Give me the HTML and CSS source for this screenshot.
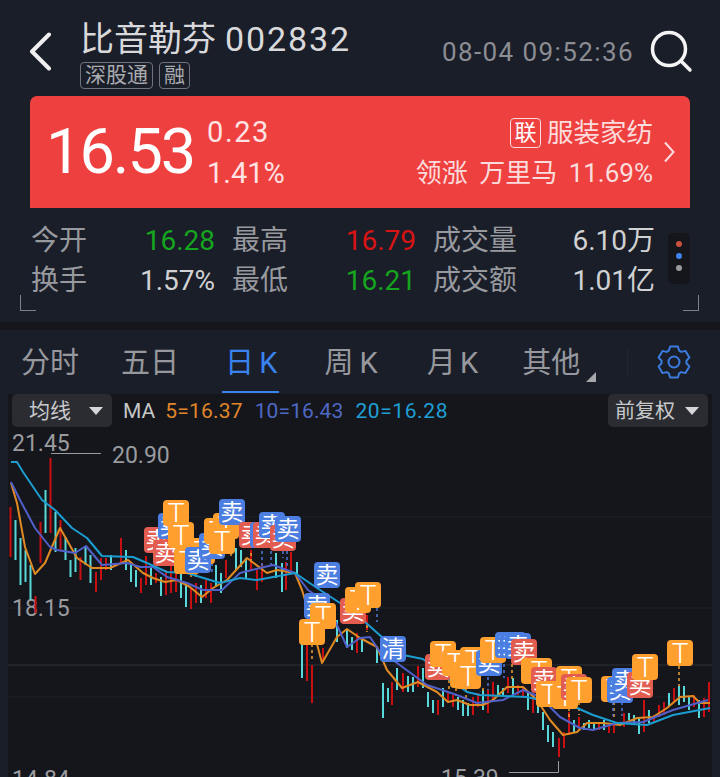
FILE: index.html
```html
<!DOCTYPE html>
<html lang="zh-CN">
<head>
    <meta charset="UTF-8">
    <meta name="viewport" content="width=device-width, initial-scale=1.0">
    <title>比音勒芬 002832</title>
    <link rel="stylesheet" href="styles.css">
</head>
<body>

    <!-- Header -->
    <header class="topbar">
        <svg class="back-icon" width="24" height="40" viewBox="0 0 24 40">
            <path d="M20 2.500 L3 19.500 L20 36.500" />
        </svg>
        <div class="stock-title">
            <div class="stock-name"><span>比音勒芬</span><span class="stock-code">002832</span></div>
            <div class="tags">
                <span class="tag">深股通</span>
                <span class="tag">融</span>
            </div>
        </div>
        <div class="quote-time">08-04 09:52:36</div>
        <svg class="search-icon" width="44" height="44" viewBox="0 0 44 44">
            <circle cx="20" cy="20" r="16.500" />
            <path d="M32 32 L41 41" />
        </svg>
    </header>

    <!-- Price card -->
    <section class="price-card">
        <div class="price">16.53</div>
        <div class="change">
            <div class="change-abs">0.23</div>
            <div>1.41%</div>
        </div>
        <div class="sector">
            <div class="sector-name"><span class="lian">联</span>服装家纺</div>
            <div class="sector-lead">领涨 万里马 11.69%</div>
        </div>
        <svg class="card-chevron" width="12" height="22" viewBox="0 0 12 22">
            <path d="M2 1.500 L10.500 11 L2 20.500" />
        </svg>
    </section>

    <!-- Stats -->
    <section class="stats">
        <div class="stats-grid">
            <span class="label">今开</span><span class="value green">16.28</span>
            <span class="label pad">最高</span><span class="value red">16.79</span>
            <span class="label pad">成交量</span><span class="value">6.10万</span>
            <span class="label">换手</span><span class="value">1.57%</span>
            <span class="label pad">最低</span><span class="value green">16.21</span>
            <span class="label pad">成交额</span><span class="value">1.01亿</span>
        </div>
        <div class="dots">
            <i class="dot dot-red"></i>
            <i class="dot dot-blue"></i>
            <i class="dot dot-grey"></i>
        </div>
        <span class="corner corner-left"></span>
        <span class="corner corner-right"></span>
    </section>

    <!-- Period tabs -->
    <nav class="tabs">
        <span class="tab tab-1">分时</span>
        <span class="tab tab-2">五日</span>
        <span class="tab tab-3 active">日 K</span>
        <span class="tab tab-4">周 K</span>
        <span class="tab tab-5">月 K</span>
        <span class="tab tab-6 more">其他</span>
        <span class="tab-sep"></span>
        <svg class="gear" width="36" height="36" viewBox="0 0 36 36">
            <circle cx="18" cy="18" r="5.500" />
            <path d="M12.920 6.580 L14.130 2.480 H21.870 L23.080 6.580 L25.350 7.890 L29.510 6.890 L33.380 13.590 L30.430 16.690 V19.310 L33.380 22.410 L29.510 29.110 L25.350 28.110 L23.080 29.420 L21.870 33.520 H14.130 L12.920 29.420 L10.650 28.110 L6.490 29.110 L2.620 22.410 L5.570 19.310 V16.690 L2.620 13.590 L6.490 6.890 L10.650 7.890 Z" />
        </svg>
    </nav>

    <!-- K line chart -->
    <section class="chart">
        <div class="chart-bar">
            <span class="pill pill-left">均线</span>
            <span class="ma-text">MA</span>
            <span class="ma5">5=16.37</span>
            <span class="ma10">10=16.43</span>
            <span class="ma20">20=16.28</span>
            <span class="pill pill-right">前复权</span>
        </div>

        <svg class="kline" width="704" height="350" viewBox="8 427 704 350">
            <path class="grid" d="M8 517H712M8 608H712M8 697H712" />
            <path class="last-line" d="M8 665H712" />

            <text class="axis" x="12" y="451">21.45</text>
            <text class="axis" x="112" y="463">20.90</text>
            <path class="leader" d="M51 453.500H101" />
            <text class="axis" x="12" y="616">18.15</text>
            <text class="axis" x="12" y="787">14.84</text>
            <text class="axis" x="441" y="786">15.39</text>
            <path class="leader" d="M509 772.500H558.500V761" />

            <path class="candle-red" d="M10.500 507V557M35.500 596V613M40.500 522V563M50.500 458V533M60.500 520V550M80.500 557V580M96 572V592M101 558V580M106 558V570M121 538V563M141 578V593M146 556V585M156 573V583M166 570V595M171 565V593M176 570V592M191 587V609M196 583V603M206 580V598M211 583V603M226 560V578M251 550V570M257 570V590M262 563V582M286 562V590M291 552V573M312 665V703M307 643V681M323 648V662M357 633V653M367 615V630M392 682V705M403 673V692M418 666V687M438 700V715M448 693V703M453 695V707M473 697V715M478 693V707M488 690V713M493 682V700M508 677V693M518 685V695M523 688V697M533 697V713M559 738V757M564 732V748M569 712V735M579 717V730M599 723V730M609 725V733M614 723V733M624 713V727M644 700V732M654 715V723M659 705V717M664 702V715M674 688V703M694 695V707M704 698V717M709 682V712" />
            <path class="candle-cyan" d="M15.500 520V560M20.500 538V585M25.500 550V582M30.500 565V600M45.500 490V533M55.500 512V552M65.500 537V560M70.500 560V577M75.500 548V572M85.500 547V565M90.500 555V583M111 555V570M126 550V570M131 563V582M136 570V587M151 567V585M161 577V596M181 573V598M186 583V607M201 585V603M216 565V587M221 573V593M236 548V570M241 550V567M246 558V578M276 553V578M282 563V592M297 562V577M302 643V678M337 620V642M347 630V648M352 637V650M362 638V652M377 647V663M383 683V718M388 688V702M397 668V690M408 676V692M413 677V692M423 668V688M428 692V707M433 700V713M443 688V707M458 697V710M463 700V716M468 703V716M483 690V710M498 685V695M503 688V695M513 678V697M528 692V710M538 703V713M543 712V730M548 725V742M553 732V747M574 720V732M584 723V730M589 720V728M594 723V730M604 720V730M629 713V720M634 715V725M639 717V734M649 710V723M669 693V707M679 686V705M684 686V702M689 697V710M699 700V718" />
            <path class="tick-orange" d="M191 574V580M196 574V580M231 553V558M251 553V565M312 644V662M367 625V632M449 680V690M456 688V696M466 689V700M483 688V696M512 664V680M569 708V720M579 702V715M614 702V718M679 666V686" />
            <path class="tick-blue" d="M212 557V574M232 528V540M262 551V566M271 551V566M283 551V558M287 551V566M317 620V636M377 608V622M488 677V690M504 664V678M613 702V716M622 702V716" />

            <polyline class="ma-line line-5" points="11,483 17,503 25,547 35,574 45,563 60,528 68,542 77,558 92,568 110,568 128,560 143,573 153,578 165,582 177,580 190,587 202,597 213,588 227,580 247,558 267,573 277,570 295,573 302,590 308,610 322,663 337,637 347,629 360,638 377,647 387,670 402,688 418,682 437,692 448,702 457,700 470,705 483,705 493,700 507,687 523,687 537,700 550,720 563,735 577,732 587,723 603,723 620,725 637,718 653,717 667,708 680,697 693,696 700,703 710,703" />
            <polyline class="ma-line line-10" points="11,482 20,500 35,528 50,547 57,550 75,553 86,546 102,565 127,563 140,567 153,567 167,577 187,583 203,590 222,590 240,573 260,568 273,565 295,573 308,590 327,603 347,647 360,638 370,637 380,652 397,663 427,685 457,695 477,703 503,700 523,690 540,697 560,717 580,728 593,730 617,723 643,722 673,710 708,700" />
            <polyline class="ma-line line-20" points="11,462 17,462 23,472 42,500 55,510 72,528 87,538 102,556 133,557 147,563 167,572 187,573 220,583 240,578 257,580 295,573 317,588 340,603 365,622 383,638 403,655 423,659 440,673 467,692 480,695 527,697 540,700 577,708 593,715 617,723 647,725 673,715 710,708" />

            <g class="badge sell-red" transform="translate(144 527)"><rect width="26" height="26" rx="4" /><text x="13" y="21">卖</text></g>
            <g class="badge sell-blue" transform="translate(158 513)"><rect width="26" height="26" rx="4" /><text x="13" y="21">卖</text></g>
            <g class="badge sell-red" transform="translate(153 540)"><rect width="26" height="26" rx="4" /><text x="13" y="21">卖</text></g>
            <g class="badge tee" transform="translate(163 500)"><rect width="26" height="26" rx="4" /><text x="13" y="21">T</text></g>
            <g class="badge tee" transform="translate(168 522)"><rect width="26" height="26" rx="4" /><text x="13" y="21">T</text></g>
            <g class="badge tee" transform="translate(174 548)"><rect width="26" height="26" rx="4" /><text x="13" y="21">T</text></g>
            <g class="badge tee" transform="translate(189 538)"><rect width="26" height="26" rx="4" /><text x="13" y="21">T</text></g>
            <g class="badge sell-blue" transform="translate(185 547)"><rect width="26" height="26" rx="4" /><text x="13" y="21">卖</text></g>
            <g class="badge sell-blue" transform="translate(199 533)"><rect width="26" height="26" rx="4" /><text x="13" y="21">卖</text></g>
            <g class="badge tee" transform="translate(204 518)"><rect width="26" height="26" rx="4" /><text x="13" y="21">T</text></g>
            <g class="badge tee" transform="translate(213 513)"><rect width="26" height="26" rx="4" /><text x="13" y="21">T</text></g>
            <g class="badge tee" transform="translate(209 528)"><rect width="26" height="26" rx="4" /><text x="13" y="21">T</text></g>
            <g class="badge sell-blue" transform="translate(219 499)"><rect width="26" height="26" rx="4" /><text x="13" y="21">卖</text></g>
            <g class="badge sell-red" transform="translate(239 522)"><rect width="26" height="26" rx="4" /><text x="13" y="21">卖</text></g>
            <g class="badge sell-blue" transform="translate(250 522)"><rect width="26" height="26" rx="4" /><text x="13" y="21">卖</text></g>
            <g class="badge sell-red" transform="translate(253 522)"><rect width="26" height="26" rx="4" /><text x="13" y="21">卖</text></g>
            <g class="badge sell-blue" transform="translate(259 512)"><rect width="26" height="26" rx="4" /><text x="13" y="21">卖</text></g>
            <g class="badge sell-red" transform="translate(270 525)"><rect width="26" height="26" rx="4" /><text x="13" y="21">卖</text></g>
            <g class="badge sell-blue" transform="translate(275 516)"><rect width="26" height="26" rx="4" /><text x="13" y="21">卖</text></g>

            <g class="badge sell-blue" transform="translate(314 562)"><rect width="26" height="26" rx="4" /><text x="13" y="21">卖</text></g>
            <g class="badge sell-blue" transform="translate(304 593)"><rect width="26" height="26" rx="4" /><text x="13" y="21">卖</text></g>
            <g class="badge tee" transform="translate(310 603)"><rect width="26" height="26" rx="4" /><text x="13" y="21">T</text></g>
            <g class="badge tee" transform="translate(299 619)"><rect width="26" height="26" rx="4" /><text x="13" y="21">T</text></g>
            <g class="badge sell-red" transform="translate(340 598)"><rect width="26" height="26" rx="4" /><text x="13" y="21">卖</text></g>
            <g class="badge tee" transform="translate(345 587)"><rect width="26" height="26" rx="4" /><text x="13" y="21">T</text></g>
            <g class="badge tee" transform="translate(355 582)"><rect width="26" height="26" rx="4" /><text x="13" y="21">T</text></g>
            <g class="badge sell-blue" transform="translate(380 636)"><rect width="26" height="26" rx="4" /><text x="13" y="21">清</text></g>

            <g class="badge sell-red" transform="translate(425 654)"><rect width="26" height="26" rx="4" /><text x="13" y="21">卖</text></g>
            <g class="badge tee" transform="translate(430 641)"><rect width="26" height="26" rx="4" /><text x="13" y="21">T</text></g>
            <g class="badge tee" transform="translate(442 650)"><rect width="26" height="26" rx="4" /><text x="13" y="21">T</text></g>
            <g class="badge tee" transform="translate(450 662)"><rect width="26" height="26" rx="4" /><text x="13" y="21">T</text></g>
            <g class="badge tee" transform="translate(460 647)"><rect width="26" height="26" rx="4" /><text x="13" y="21">T</text></g>
            <g class="badge tee" transform="translate(455 663)"><rect width="26" height="26" rx="4" /><text x="13" y="21">T</text></g>
            <g class="badge sell-blue" transform="translate(476 650)"><rect width="26" height="26" rx="4" /><text x="13" y="21">卖</text></g>
            <g class="badge tee" transform="translate(480 637)"><rect width="26" height="26" rx="4" /><text x="13" y="21">T</text></g>
            <g class="badge sell-blue" transform="translate(495 632)"><rect width="26" height="26" rx="4" /><text x="13" y="21">卖</text></g>
            <g class="badge sell-blue" transform="translate(500 632)"><rect width="26" height="26" rx="4" /><text x="13" y="21">卖</text></g>
            <g class="badge sell-blue" transform="translate(505 633)"><rect width="26" height="26" rx="4" /><text x="13" y="21">卖</text></g>
            <g class="badge sell-red" transform="translate(511 639)"><rect width="26" height="26" rx="4" /><text x="13" y="21">卖</text></g>

            <g class="badge tee" transform="translate(521 658)"><rect width="31" height="26" rx="4" /><text x="18" y="21">T</text></g>
            <g class="badge sell-red" transform="translate(531 667)"><rect width="26" height="26" rx="4" /><text x="13" y="21">卖</text></g>
            <g class="badge tee" transform="translate(536 681)"><rect width="26" height="26" rx="4" /><text x="13" y="21">T</text></g>
            <g class="badge tee" transform="translate(556 666)"><rect width="26" height="26" rx="4" /><text x="13" y="21">T</text></g>
            <g class="badge tee" transform="translate(552 683)"><rect width="26" height="26" rx="4" /><text x="13" y="21">T</text></g>
            <g class="badge sell-red" transform="translate(561 674)"><rect width="26" height="26" rx="4" /><text x="13" y="21">卖</text></g>
            <g class="badge tee" transform="translate(566 677)"><rect width="26" height="26" rx="4" /><text x="13" y="21">T</text></g>

            <g class="badge tee" transform="translate(601 676)"><rect width="26" height="26" rx="4" /><text x="13" y="21">T</text></g>
            <g class="badge sell-blue" transform="translate(607 677)"><rect width="26" height="26" rx="4" /><text x="13" y="21">卖</text></g>
            <g class="badge sell-blue" transform="translate(612 668)"><rect width="26" height="26" rx="4" /><text x="13" y="21">卖</text></g>
            <g class="badge sell-red" transform="translate(627 672)"><rect width="26" height="26" rx="4" /><text x="13" y="21">卖</text></g>
            <g class="badge tee" transform="translate(632 654)"><rect width="26" height="26" rx="4" /><text x="13" y="21">T</text></g>
            <g class="badge tee" transform="translate(667 640)"><rect width="26" height="26" rx="4" /><text x="13" y="21">T</text></g>
        </svg>
    </section>

</body>
</html>
```

FILE: styles.css
```css
html, body {
    margin: 0;
    padding: 0;
}

body {
    width: 720px;
    height: 777px;
    overflow: hidden;
    background-color: #1a1e29;
    color: #d8d8da;
    font-family: Roboto, "Noto Sans CJK SC", sans-serif;
}

/* Header */
.topbar {
    height: 96px;
    display: flex;
    align-items: flex-start;
}

.back-icon {
    margin: 32px 0 0 29px;
    flex: none;
}

.back-icon path {
    fill: none;
    stroke: #f0f0f0;
    stroke-width: 4;
    stroke-linecap: round;
    stroke-linejoin: round;
}

.stock-title {
    margin: 16px 0 0 27px;
    width: 362px;
}

.stock-name {
    display: flex;
    align-items: center;
    font-size: 34px;
    line-height: 46px;
    color: #d9d9db;
}

.stock-code {
    margin-left: 9px;
    letter-spacing: 1.900px;
}

.tags {
    display: flex;
    gap: 6px;
    margin-left: 0;
}

.tag {
    height: 25px;
    padding: 0 4px;
    border: 1px solid #70737a;
    border-radius: 4px;
    font-size: 21px;
    line-height: 24px;
    color: #a9abaf;
}

.quote-time {
    margin: 35px 0 0 0;
    width: 192px;
    font-size: 26px;
    line-height: 34px;
    color: #8b8d93;
    letter-spacing: 1.400px;
    white-space: nowrap;
}

.search-icon {
    margin: 29px 0 0 15px;
    flex: none;
}

.search-icon circle,
.search-icon path {
    fill: none;
    stroke: #f4f4f4;
    stroke-width: 3.500;
    stroke-linecap: round;
}

/* Price card */
.price-card {
    margin: 0 30px;
    height: 112px;
    display: flex;
    position: relative;
    background-color: #ef4040;
    border-radius: 7px 7px 0 0;
    color: #fff;
}

.price {
    margin: 14px 0 0 16px;
    width: 161px;
    font-size: 63px;
    line-height: 84px;
    letter-spacing: -2px;
}

.change {
    font-size: 29px;
    line-height: 41px;
    padding-top: 16px;
    color: #fde3e3;
}

.change-abs {
    letter-spacing: 1.600px;
}

.sector {
    margin-left: auto;
    padding: 16px 37px 0 0;
    text-align: right;
    color: #fbdcdc;
    font-size: 26px;
    line-height: 41px;
}

.sector-name {
    display: flex;
    justify-content: flex-end;
    align-items: center;
    gap: 6px;
    font-size: 26.500px;
}

.sector-lead {
    word-spacing: 5px;
}

.lian {
    width: 29px;
    height: 28px;
    border: 1px solid #fbdcdc;
    border-radius: 4px;
    font-size: 22px;
    line-height: 27px;
    text-align: center;
    color: #fff;
}

.card-chevron {
    position: absolute;
    right: 15px;
    top: 45px;
}

.card-chevron path {
    fill: none;
    stroke: #fbdcdc;
    stroke-width: 2;
}

/* Stats */
.stats {
    height: 114px;
    position: relative;
    border-bottom: 8px solid #14161c;
}

.stats-grid {
    margin-left: 31px;
    padding-top: 13px;
    display: grid;
    grid-template-columns: 70px 114px 78px 123px 117px 122px;
    grid-auto-rows: 40px;
    font-size: 28px;
    line-height: 40px;
}

.label {
    color: #97999e;
    white-space: nowrap;
}

.pad {
    padding-left: 17px;
}

.value {
    text-align: right;
    color: #d0d1d3;
    white-space: nowrap;
}

.green {
    color: #16a51e;
}

.red {
    color: #d81414;
}

.dots {
    position: absolute;
    left: 668px;
    top: 25px;
    width: 22px;
    height: 51px;
    box-sizing: border-box;
    padding-top: 8px;
    display: flex;
    flex-direction: column;
    align-items: center;
    gap: 6px;
    background-color: #14161c;
    border-radius: 5px;
}

.dot {
    width: 6px;
    height: 6px;
    border-radius: 50%;
}

.dot-red {
    background-color: #c8503c;
}

.dot-blue {
    background-color: #3f86f0;
}

.dot-grey {
    background-color: #9b9b9b;
}

.corner {
    position: absolute;
    top: 87px;
    width: 15px;
    height: 15px;
    border-bottom: 1px solid #7d8087;
}

.corner-left {
    left: 20px;
    border-left: 1px solid #7d8087;
}

.corner-right {
    left: 683px;
    border-right: 1px solid #7d8087;
}

/* Tabs */
.tabs {
    height: 64px;
    display: flex;
    align-items: center;
    font-size: 29px;
    color: #96989d;
}

.tab {
    height: 62px;
    line-height: 64px;
    white-space: nowrap;
}

.tab-1 {
    margin-left: 21px;
}

.tab-2 {
    margin-left: 42px;
}

.tab-3 {
    margin-left: 43px;
    word-spacing: -2px;
}

.tab-4 {
    margin-left: 45px;
    word-spacing: -1px;
}

.tab-5 {
    margin-left: 49px;
    word-spacing: -3px;
}

.tab-6 {
    margin-left: 44px;
    position: relative;
}

.active {
    color: #3a82ee;
    box-shadow: inset 0 -2px 0 #3a82ee;
    padding: 0 2px 0 3px;
}

.more::after {
    content: "";
    position: absolute;
    right: -16px;
    bottom: 11px;
    border-style: solid;
    border-width: 0 0 10px 10px;
    border-color: transparent transparent #a5a7ab transparent;
}

.tab-sep {
    margin-left: 47px;
    width: 1px;
    height: 28px;
    background-color: #22262f;
}

.gear {
    margin-left: 28px;
}

.gear circle,
.gear path {
    fill: none;
    stroke: #3a7ce0;
    stroke-width: 2;
    stroke-linejoin: round;
}

/* Chart */
.chart {
    margin: 0 8px;
    height: 383px;
    background-color: #14161c;
    overflow: hidden;
}

.chart-bar {
    height: 33px;
    display: flex;
    align-items: center;
    padding: 0 4px;
    font-size: 21px;
}

.pill {
    position: relative;
    width: 100px;
    height: 33px;
    box-sizing: border-box;
    background-color: #2a2c32;
    border-radius: 5px;
    color: #c8c9cb;
    font-size: 21px;
    line-height: 34px;
}

.pill-left {
    padding-left: 17px;
}

.pill-right {
    margin-left: auto;
    padding-left: 7px;
    font-size: 20px;
}

.pill::after {
    content: "";
    position: absolute;
    right: 9px;
    top: 13px;
    border-style: solid;
    border-width: 8px 7px 0 7px;
    border-color: #d6d6d8 transparent transparent transparent;
}

.ma-text {
    margin-left: 11px;
    color: #c5c6c8;
}

.ma5 {
    margin-left: 10px;
    letter-spacing: 0.200px;
    color: #e0862a;
}

.ma10 {
    margin-left: 12px;
    letter-spacing: 0.100px;
    color: #4f68c4;
}

.ma20 {
    margin-left: 12px;
    letter-spacing: 0.600px;
    color: #1f9fd3;
}

.kline {
    display: block;
}

.grid {
    fill: none;
    stroke: #1d2026;
    stroke-width: 1;
}

.last-line {
    fill: none;
    stroke: #2e3036;
    stroke-width: 1;
}

.axis {
    font-size: 23px;
    fill: #9a9b9f;
}

.leader {
    fill: none;
    stroke: #9a9b9f;
    stroke-width: 1;
}

.candle-red,
.candle-cyan {
    fill: none;
    stroke-width: 2;
}

.candle-red {
    stroke: #c80f12;
}

.candle-cyan {
    stroke: #58d8d8;
}

.tick-orange,
.tick-blue {
    fill: none;
    stroke-width: 1.500;
    stroke-dasharray: 3 3;
}

.tick-orange {
    stroke: #f0a030;
}

.tick-blue {
    stroke: #4f78d8;
}

.ma-line {
    fill: none;
    stroke-width: 2;
    stroke-linejoin: round;
}

.line-5 {
    stroke: #e08a24;
}

.line-10 {
    stroke: #5060c8;
}

.line-20 {
    stroke: #1c9ccf;
}

.badge text {
    font-size: 23px;
    fill: #fff;
    text-anchor: middle;
}

.tee text {
    font-size: 28px;
    font-weight: 300;
    transform: translateY(2px);
}

.sell-red rect {
    fill: #e25c50;
}

.sell-blue rect {
    fill: #4c7de0;
}

.tee rect {
    fill: #ffa02e;
}
```
